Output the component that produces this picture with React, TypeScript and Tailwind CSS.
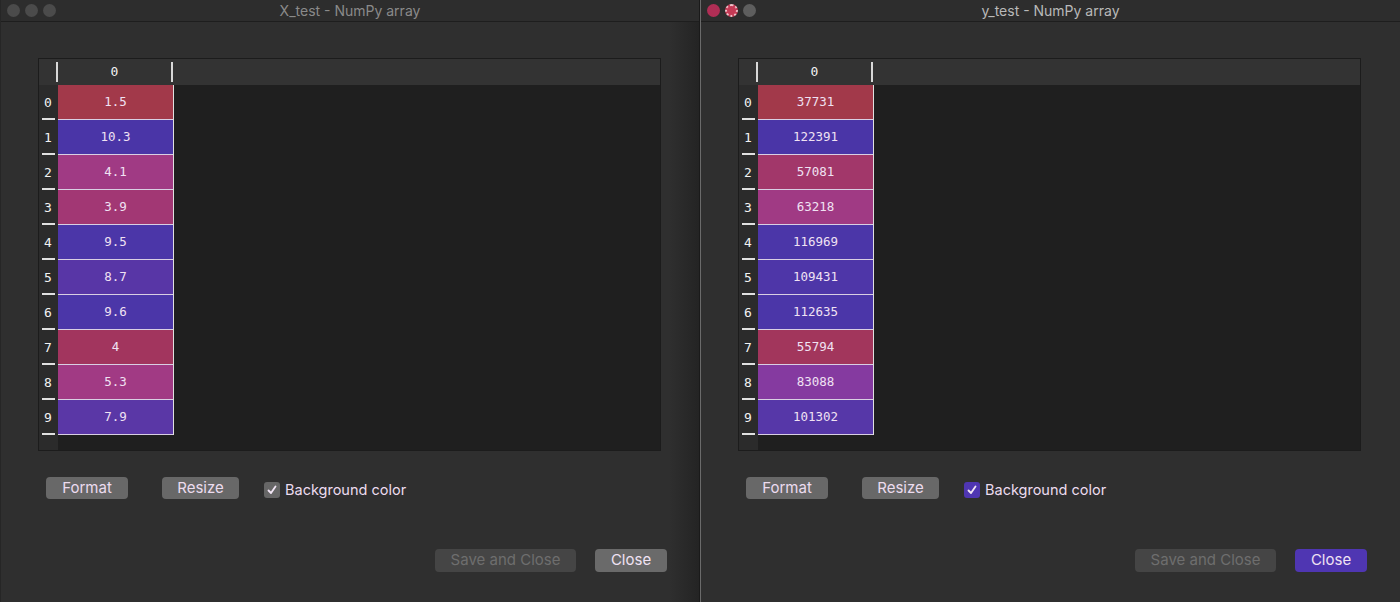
const left = [
  { v: "1.5", c: "bg-[#a2394a]" },
  { v: "10.3", c: "bg-[#4a35a7]" },
  { v: "4.1", c: "bg-[#a03a84]" },
  { v: "3.9", c: "bg-[#a23774]" },
  { v: "9.5", c: "bg-[#4b36a8]" },
  { v: "8.7", c: "bg-[#5836a6]" },
  { v: "9.6", c: "bg-[#4b36a8]" },
  { v: "4", c: "bg-[#a2355e]" },
  { v: "5.3", c: "bg-[#a13a84]" },
  { v: "7.9", c: "bg-[#5a37a6]" },
];

const right = [
  { v: "37731", c: "bg-[#a2394a]" },
  { v: "122391", c: "bg-[#4a35a7]" },
  { v: "57081", c: "bg-[#a2376a]" },
  { v: "63218", c: "bg-[#a03a84]" },
  { v: "116969", c: "bg-[#4b36a8]" },
  { v: "109431", c: "bg-[#4e36a8]" },
  { v: "112635", c: "bg-[#4b36a8]" },
  { v: "55794", c: "bg-[#a2365c]" },
  { v: "83088", c: "bg-[#853aa0]" },
  { v: "101302", c: "bg-[#5637a8]" },
];

const mono = { fontFamily: '"DejaVu Sans Mono", "Liberation Mono", monospace' };
const sans = { fontFamily: 'Inter, "Liberation Sans", sans-serif' };

function Table({ rows }: { rows: { v: string; c: string }[] }) {
  return (
    <div className="flex h-[393px] w-[623px] flex-col border border-[#1c1c1c] bg-[#1f1f1f]" style={mono}>
      {/* header */}
      <div className="flex h-[26px] shrink-0 bg-[#333333]">
        <div className="my-[3px] w-[19px] border-r-2 border-[#d8d8d8]" />
        <div className="my-[3px] flex w-[115px] items-center justify-center border-r-2 border-[#d8d8d8] text-[13px] text-[#f2f2f2]">
          0
        </div>
      </div>
      <div className="flex flex-1">
        {/* index column */}
        <div className="flex w-[19px] flex-col bg-[#2b2b2b]">
          {rows.map((r, i) => (
            <div key={i} className="relative flex h-[35px] items-center pl-[5px] text-[13px] text-[#f2f2f2]">
              {i}
              <div className="absolute bottom-0 left-[3px] h-[2px] w-[13px] bg-[#e0e0e0]" />
            </div>
          ))}
        </div>
        {/* data column */}
        <div className="flex w-[116px] flex-col self-start border-r border-[#e0e0e0]">
          {rows.map((r, i) => (
            <div
              key={i}
              className={`flex h-[35px] items-center justify-center border-b border-[#d9cfe3] text-[12.5px] text-[#f0e2f3] ${r.c}`}
            >
              {r.v}
            </div>
          ))}
        </div>
      </div>
    </div>
  );
}

function Window({
  title,
  rows,
  active,
}: {
  title: string;
  rows: { v: string; c: string }[];
  active: boolean;
}) {
  return (
    <div className="flex h-full flex-col bg-[#2f2f2f]" style={sans}>
      <div className="relative flex h-[22px] shrink-0 items-center justify-center border-b border-[#1e1e1e] bg-[#2d2d2d]">
        <div className="absolute left-[6px] top-[4px] flex gap-[5px]">
          {active ? (
            <>
              <div className="h-[13px] w-[13px] rounded-full bg-[#b02e55]" />
              <div className="h-[13px] w-[13px] rounded-full border-2 border-dotted border-[#f0c0c8] bg-[#c43a55]" />
              <div className="h-[13px] w-[13px] rounded-full bg-[#5e5e5e]" />
            </>
          ) : (
            <>
              <div className="h-[13px] w-[13px] rounded-full bg-[#4b4b4b]" />
              <div className="h-[13px] w-[13px] rounded-full bg-[#4b4b4b]" />
              <div className="h-[13px] w-[13px] rounded-full bg-[#4b4b4b]" />
            </>
          )}
        </div>
        <span className={`text-[14px] ${active ? "text-[#b9b9b9]" : "text-[#8a8a8a]"}`}>{title}</span>
      </div>

      <div className="pl-[37px] pt-[36px]">
        <Table rows={rows} />
      </div>

      <div className="flex items-center pl-[45px] pt-[25px]">
        <button className="h-[22px] w-[82px] rounded-[4px] bg-[#686868] text-[15px] text-[#ecdcef]">Format</button>
        <button className="ml-[34px] h-[22px] w-[77px] rounded-[4px] bg-[#686868] text-[15px] text-[#ecdcef]">
          Resize
        </button>
        <div className="ml-[25px] flex items-center gap-[5px] pt-[3px]">
          <div
            className={`flex h-[16px] w-[16px] items-center justify-center rounded-[3px] ${
              active ? "bg-[#4f36b2]" : "bg-[#666666]"
            }`}
          >
            <svg width="12" height="12" viewBox="0 0 12 12" fill="none">
              <path d="M2.5 6.5 L5 9 L9.5 2.5" stroke="#f2e6f5" strokeWidth="1.8" strokeLinecap="round" strokeLinejoin="round" />
            </svg>
          </div>
          <span className="text-[14.5px] text-[#ecdcef]">Background color</span>
        </div>
      </div>

      <div className="flex justify-start pl-[434px] pt-[48px]">
        <button className="h-[23px] w-[141px] rounded-[4px] bg-[#454545] text-[15px] text-[#6e6e6e]">
          Save and Close
        </button>
        <button
          className={`ml-[19px] h-[23px] w-[72px] rounded-[4px] text-[15px] text-[#f0e2f3] ${
            active ? "bg-[#4f36b2]" : "bg-[#6a6a6a]"
          }`}
        >
          Close
        </button>
      </div>
    </div>
  );
}

export default function App() {
  return (
    <div className="flex h-[602px] w-[1400px] overflow-hidden bg-[#2f2f2f]">
      <div className="relative w-[699px] shrink-0 border-l border-[#262626]">
        <Window title="X_test - NumPy array" rows={left} active={false} />
        <div className="pointer-events-none absolute right-0 top-[22px] h-full w-[30px] bg-gradient-to-r from-transparent to-[#1f1f1f]/70" />
      </div>
      <div className="w-[1px] bg-[#1a1a1a]" />
      <div className="w-[1px] bg-[#6a6a6a]" />
      <div className="flex-1">
        <Window title="y_test - NumPy array" rows={right} active={true} />
      </div>
    </div>
  );
}
